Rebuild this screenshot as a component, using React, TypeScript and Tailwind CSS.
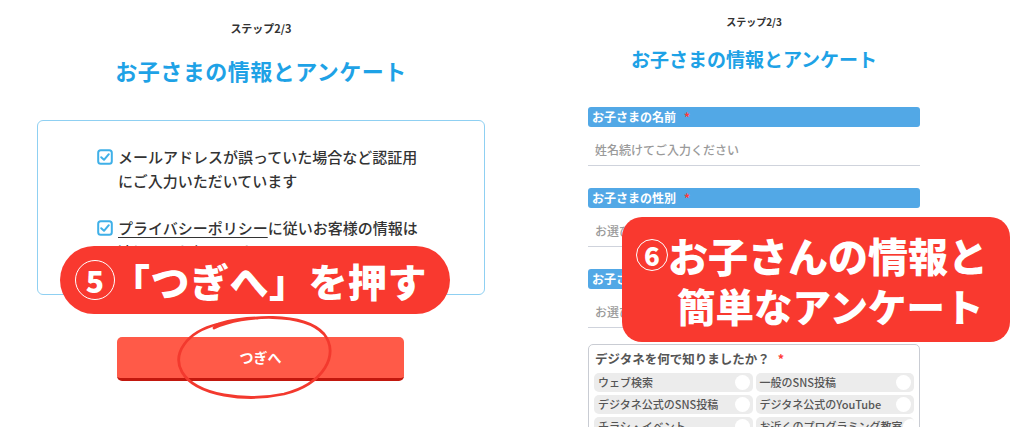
import React from "react";

const Check = () => (
  <svg width="16" height="16" viewBox="0 0 16 16" className="shrink-0 mt-[4px]">
    <rect x="1.2" y="1.2" width="13.6" height="13.6" rx="2.5" fill="white" stroke="#3fb0e8" strokeWidth="2" />
    <path d="M4.2 8.2 L7 10.8 L11.8 5.2" fill="none" stroke="#3fb0e8" strokeWidth="2" strokeLinecap="round" strokeLinejoin="round" />
  </svg>
);

const Label = ({ text }: { text: string }) => (
  <div className="h-[20px] rounded-[3px] bg-[#52a8e6] pl-[4px] flex items-center text-[12px] font-bold text-white leading-none">
    {text}
    <span className="text-[#ff3b3b] ml-[8px]">*</span>
  </div>
);

const Input = ({ ph }: { ph: string }) => (
  <div className="pt-[15px] pb-[7px] pl-[7px] border-b-[1.5px] border-[#cfd3dc] text-[12px] leading-[16px] text-[#9a9a9a] font-medium">
    {ph}
  </div>
);

const Opt = ({ t }: { t: string }) => (
  <div className="h-[19px] rounded-[5px] bg-[#ececec] flex items-center justify-between pl-[4px] pr-[3px] overflow-hidden">
    <span className="text-[11px] text-[#555] leading-none whitespace-nowrap font-medium">{t}</span>
    <span className="w-[15px] h-[15px] rounded-full bg-white shrink-0" />
  </div>
);

export default function App() {
  return (
    <div className="relative w-[1024px] h-[427px] overflow-hidden bg-white font-['Noto_Sans_CJK_JP',sans-serif] flex">
      {/* Left panel */}
      <div className="w-[512px] flex flex-col pt-[20px]">
        <div className="text-[11px] leading-[16px] font-bold text-[#333] text-center w-[522px]">ステップ2/3</div>
        <div className="mt-[19px] text-[22px] leading-[30px] font-bold text-[#1ea2e6] text-center w-[522px] tracking-[0.5px]">
          お子さまの情報とアンケート
        </div>
        <div className="mt-[35px] ml-[37px] w-[448px] h-[175px] border-[1.5px] border-[#8fd0f2] rounded-[6px] pt-[24px] pl-[59px] pr-[20px]">
          <div className="flex gap-[5px]">
            <Check />
            <div className="text-[15px] leading-[24px] font-medium text-[#333]">
              メールアドレスが誤っていた場合など認証用
              <br />
              にご入力いただいています
            </div>
          </div>
          <div className="flex gap-[5px] mt-[23px]">
            <Check />
            <div className="text-[15px] leading-[24px] font-medium text-[#333]">
              <span className="underline underline-offset-[3px]">プライバシーポリシー</span>に従いお客様の情報は
              <br />
              適切に取り扱います
            </div>
          </div>
        </div>
        <div className="mt-[42px] ml-[117px] w-[287px] h-[44px] rounded-[5px] bg-[#ff5a48] border-b-[3px] border-[#c2180e] flex items-center justify-center text-white text-[14px] font-bold">
          つぎへ
        </div>
      </div>

      {/* Right panel */}
      <div className="w-[512px] flex flex-col pt-[15px]">
        <div className="text-[10px] leading-[14px] font-bold text-[#333] text-center w-[484px]">ステップ2/3</div>
        <div className="mt-[17px] text-[19px] leading-[26px] font-bold text-[#1ea2e6] text-center w-[484px]">
          お子さまの情報とアンケート
        </div>
        <div className="mt-[35px] ml-[76px] w-[332px] flex flex-col">
          <Label text="お子さまの名前" />
          <Input ph="姓名続けてご入力ください" />
          <div className="mt-[22px]" />
          <Label text="お子さまの性別" />
          <Input ph="お選びください" />
          <div className="mt-[22px]" />
          <Label text="お子さまの学年" />
          <Input ph="お選びください" />
          <div className="mt-[16px] border-[1.5px] border-[#c9ccd3] rounded-[5px] px-[5px] pt-[5px] pb-[6px]">
            <div className="text-[12.5px] leading-[18px] text-[#555] font-bold pl-[1px]">
              デジタネを何で知りましたか？<span className="text-[#ff3b3b] ml-[8px]">*</span>
            </div>
            <div className="grid grid-cols-2 gap-[3px] mt-[5px]">
              <Opt t="ウェブ検索" />
              <Opt t="一般のSNS投稿" />
              <Opt t="デジタネ公式のSNS投稿" />
              <Opt t="デジタネ公式のYouTube" />
              <Opt t="チラシ・イベント" />
              <Opt t="お近くのプログラミング教室" />
            </div>
          </div>
        </div>
      </div>

      {/* Overlay 1 */}
      <div className="absolute left-[60px] top-[246px] w-[390px] h-[68px] rounded-full bg-[#f9392f] flex items-center pl-[15px] text-white">
        <span className="w-[40px] h-[40px] rounded-full border-[1.5px] border-white flex items-center justify-center text-[30px] font-black leading-none shrink-0">
          5
        </span>
        <span className="text-[39px] font-black leading-none -ml-[4px] tracking-[0.5px]">「つぎへ」を押す</span>
      </div>

      {/* Circle around button */}
      <svg className="absolute left-[174px] top-[312px]" width="164" height="90" viewBox="0 0 164 90">
        <path
          d="M40 16 C70 2 130 0 150 22 C166 42 150 72 110 82 C72 90 22 84 8 60 C-2 42 12 20 44 12 C58 8 70 6 84 6"
          fill="none"
          stroke="#f3392e"
          strokeWidth="2.8"
          strokeLinecap="round"
        />
      </svg>

      {/* Overlay 2 */}
      <div className="absolute left-[622px] top-[217px] w-[388px] h-[125px] rounded-[20px] bg-[#f9392f] text-white pt-[14px]">
        <div className="flex items-center pl-[14px] h-[48px]">
          <span className="w-[32px] h-[32px] rounded-full border-[1.5px] border-white flex items-center justify-center text-[26px] font-black leading-none shrink-0">
            6
          </span>
          <span className="text-[40px] font-black leading-none">お子さんの情報と</span>
        </div>
        <div className="pl-[55px] text-[38.5px] font-black leading-[48px] mt-[2px]">簡単なアンケート</div>
      </div>
    </div>
  );
}
